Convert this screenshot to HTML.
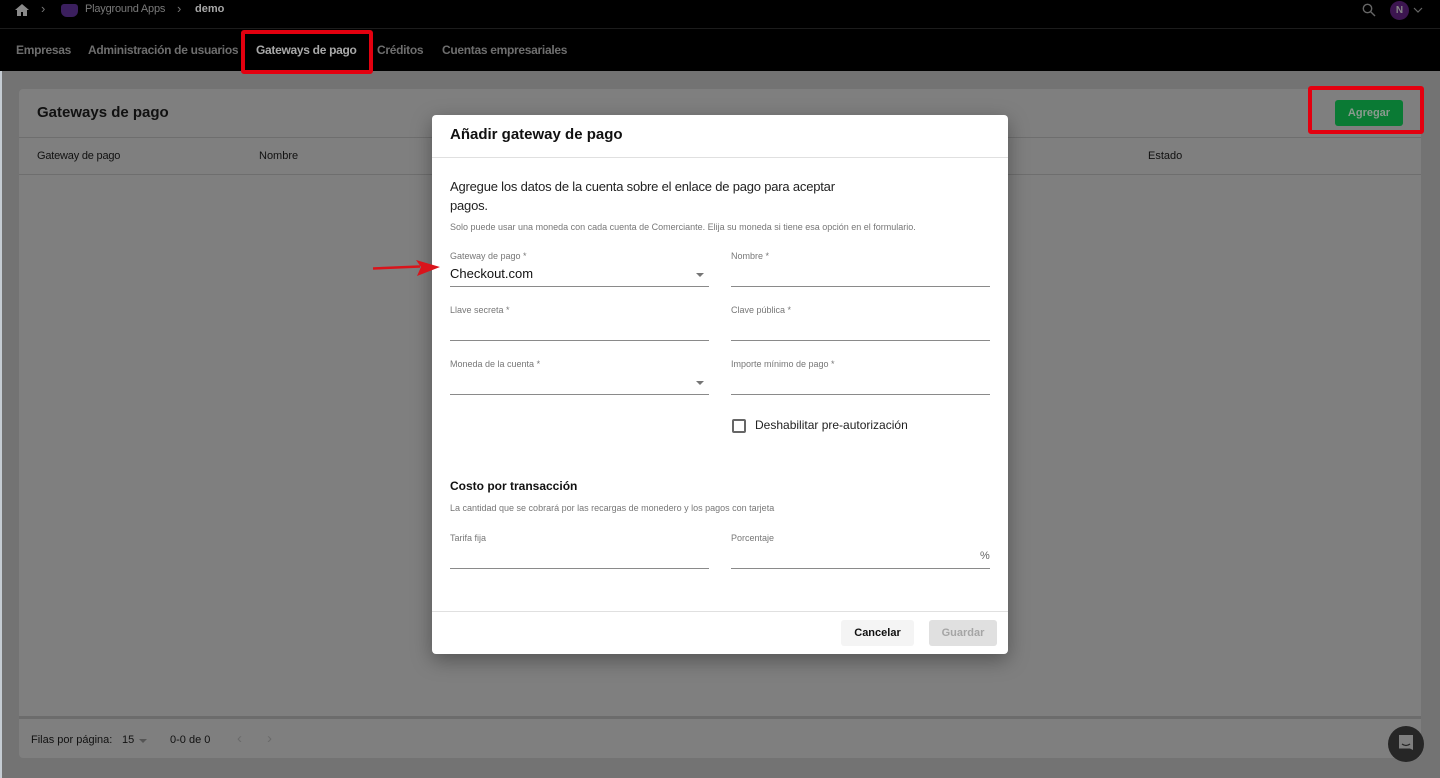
<!DOCTYPE html>
<html><head><meta charset="utf-8"><style>
*{box-sizing:border-box;margin:0;padding:0}
body{width:1440px;height:778px;overflow:hidden;background:#737373;font-family:"Liberation Sans",sans-serif;position:relative}
.a{position:absolute;white-space:nowrap}
.lbl{font-size:9px;color:#777}
.ul{position:absolute;height:1px;background:#8a8a8a}
.caret{position:absolute;width:0;height:0;border-left:4px solid transparent;border-right:4px solid transparent;border-top:4px solid #757575}
.nav{top:43px;color:#6e6e6e;font-size:12px;font-weight:bold;letter-spacing:-0.3px}
</style></head><body>
<div class="a" style="left:0;top:0;width:2px;height:778px;background:#c5ccd3"></div>
<div class="a" style="left:0;top:0;width:1440px;height:71px;background:#000"></div>
<div class="a" style="left:0;top:28px;width:1440px;height:1px;background:#1c1c1c"></div>
<svg class="a" style="left:14px;top:3px" width="16" height="14" viewBox="0 0 16 14"><path d="M8 1L1 7h2v6h4V9h2v4h4V7h2z" fill="#8a8a8a"/></svg>
<div class="a" style="left:41px;top:1px;color:#777;font-size:13px">›</div>
<div class="a" style="left:61px;top:4px;width:17px;height:13px;border-radius:3px 3px 6px 6px;background:#3b1f5e"></div>
<div class="a" style="left:85px;top:3px;color:#7a7a7a;font-size:11px;letter-spacing:-0.2px">Playground Apps</div>
<div class="a" style="left:177px;top:1px;color:#777;font-size:13px">›</div>
<div class="a" style="left:195px;top:3px;color:#a8a8a8;font-size:11px;font-weight:bold">demo</div>
<svg class="a" style="left:1362px;top:3px" width="14" height="14" viewBox="0 0 14 14"><circle cx="5.5" cy="5.5" r="4.2" fill="none" stroke="#666" stroke-width="1.4"/><path d="M8.6 8.6L13 13" stroke="#666" stroke-width="1.4"/></svg>
<div class="a" style="left:1390px;top:1px;width:19px;height:19px;border-radius:50%;background:#3c1550;color:#888;font-size:10px;font-weight:bold;text-align:center;line-height:19px">N</div>
<svg class="a" style="left:1413px;top:7px" width="10" height="6" viewBox="0 0 10 6"><path d="M1 1l4 4 4-4" fill="none" stroke="#666" stroke-width="1.2"/></svg>
<div class="a nav" style="left:16px">Empresas</div>
<div class="a nav" style="left:88px">Administración de usuarios</div>
<div class="a nav" style="left:256px;color:#a9a9a9">Gateways de pago</div>
<div class="a nav" style="left:377px">Créditos</div>
<div class="a nav" style="left:442px">Cuentas empresariales</div>
<div class="a" style="left:241px;top:30px;width:132px;height:44px;border:4px solid #e3000f;border-radius:3px"></div>

<div class="a" style="left:19px;top:89px;width:1402px;height:669px;background:#7f7f7f;border-radius:4px"></div>
<div class="a" style="left:37px;top:104px;color:#111;font-size:15px;font-weight:bold">Gateways de pago</div>
<div class="a" style="left:19px;top:137px;width:1402px;height:1px;background:#6e6e6e"></div>
<div class="a" style="left:37px;top:150px;color:#111;font-size:11px;letter-spacing:-0.2px">Gateway de pago</div>
<div class="a" style="left:259px;top:150px;color:#111;font-size:11px">Nombre</div>
<div class="a" style="left:1148px;top:150px;color:#111;font-size:11px">Estado</div>
<div class="a" style="left:19px;top:174px;width:1402px;height:1px;background:#6e6e6e"></div>
<div class="a" style="left:19px;top:716px;width:1402px;height:3px;background:#6c6c6c"></div>
<div class="a" style="left:31px;top:734px;color:#111;font-size:11px">Filas por página:</div>
<div class="a" style="left:122px;top:734px;color:#111;font-size:11px">15</div>
<div class="caret" style="left:139px;top:739px;border-top-color:#555"></div>
<div class="a" style="left:170px;top:734px;color:#111;font-size:11px">0-0 de 0</div>
<div class="a" style="left:237px;top:730px;color:#6a6a6a;font-size:15px">‹</div>
<div class="a" style="left:267px;top:730px;color:#6a6a6a;font-size:15px">›</div>
<div class="a" style="left:1335px;top:100px;width:68px;height:26px;background:#0a7a34;border-radius:3px;color:#8a9a8f;font-size:11px;font-weight:bold;text-align:center;line-height:26px">Agregar</div>
<div class="a" style="left:1308px;top:86px;width:116px;height:48px;border:4px solid #e3000f;border-radius:3px"></div>
<div class="a" style="left:1388px;top:726px;width:36px;height:36px;border-radius:50%;background:#262626"></div>
<svg class="a" style="left:1397px;top:734px" width="18" height="19" viewBox="0 0 18 19"><path d="M2 1h14v15l-3-1.5H2z" fill="#7f7f7f"/><path d="M5 10q4 3 8 0" stroke="#262626" stroke-width="1.3" fill="none"/></svg>

<div class="a" style="left:432px;top:115px;width:576px;height:539px;background:#fff;border-radius:4px;box-shadow:0 6px 20px rgba(0,0,0,.35)"></div>
<div class="a" style="left:450px;top:126px;color:#111;font-size:15px;font-weight:bold">Añadir gateway de pago</div>
<div class="a" style="left:432px;top:157px;width:576px;height:1px;background:#e0e0e0"></div>
<div class="a" style="left:450px;top:177px;color:#222;font-size:13px;line-height:19px;letter-spacing:-0.2px">Agregue los datos de la cuenta sobre el enlace de pago para aceptar<br>pagos.</div>
<div class="a lbl" style="left:450px;top:222px">Solo puede usar una moneda con cada cuenta de Comerciante. Elija su moneda si tiene esa opción en el formulario.</div>

<div class="a lbl" style="left:450px;top:251px">Gateway de pago *</div>
<div class="a" style="left:450px;top:266px;color:#111;font-size:13px">Checkout.com</div>
<div class="caret" style="left:696px;top:273px"></div>
<div class="ul" style="left:450px;top:286px;width:259px"></div>
<div class="a lbl" style="left:731px;top:251px">Nombre *</div>
<div class="ul" style="left:731px;top:286px;width:259px"></div>

<div class="a lbl" style="left:450px;top:305px">Llave secreta *</div>
<div class="ul" style="left:450px;top:340px;width:259px"></div>
<div class="a lbl" style="left:731px;top:305px">Clave pública *</div>
<div class="ul" style="left:731px;top:340px;width:259px"></div>

<div class="a lbl" style="left:450px;top:359px">Moneda de la cuenta *</div>
<div class="caret" style="left:696px;top:381px"></div>
<div class="ul" style="left:450px;top:394px;width:259px"></div>
<div class="a lbl" style="left:731px;top:359px">Importe mínimo de pago *</div>
<div class="ul" style="left:731px;top:394px;width:259px"></div>

<div class="a" style="left:732px;top:419px;width:14px;height:14px;border:2px solid #666;border-radius:2px"></div>
<div class="a" style="left:755px;top:418px;color:#222;font-size:12px">Deshabilitar pre-autorización</div>

<div class="a" style="left:450px;top:479px;color:#111;font-size:12px;font-weight:bold">Costo por transacción</div>
<div class="a lbl" style="left:450px;top:503px">La cantidad que se cobrará por las recargas de monedero y los pagos con tarjeta</div>
<div class="a lbl" style="left:450px;top:533px">Tarifa fija</div>
<div class="ul" style="left:450px;top:568px;width:259px"></div>
<div class="a lbl" style="left:731px;top:533px">Porcentaje</div>
<div class="a" style="left:980px;top:550px;color:#666;font-size:11px">%</div>
<div class="ul" style="left:731px;top:568px;width:259px"></div>

<div class="a" style="left:432px;top:611px;width:576px;height:1px;background:#e0e0e0"></div>
<div class="a" style="left:841px;top:620px;width:73px;height:26px;background:#f4f4f4;border-radius:3px;color:#111;font-size:11px;font-weight:bold;text-align:center;line-height:26px">Cancelar</div>
<div class="a" style="left:929px;top:620px;width:68px;height:26px;background:#e0e0e0;border-radius:3px;color:#a5a5a5;font-size:11px;font-weight:bold;text-align:center;line-height:26px">Guardar</div>

<svg class="a" style="left:370px;top:258px" width="72" height="20" viewBox="0 0 72 20"><path d="M3 10.5L50 8.5" stroke="#d9141b" stroke-width="2.5"/><path d="M46 2L70 9 47 18 51 9z" fill="#d9141b"/></svg>
</body></html>
